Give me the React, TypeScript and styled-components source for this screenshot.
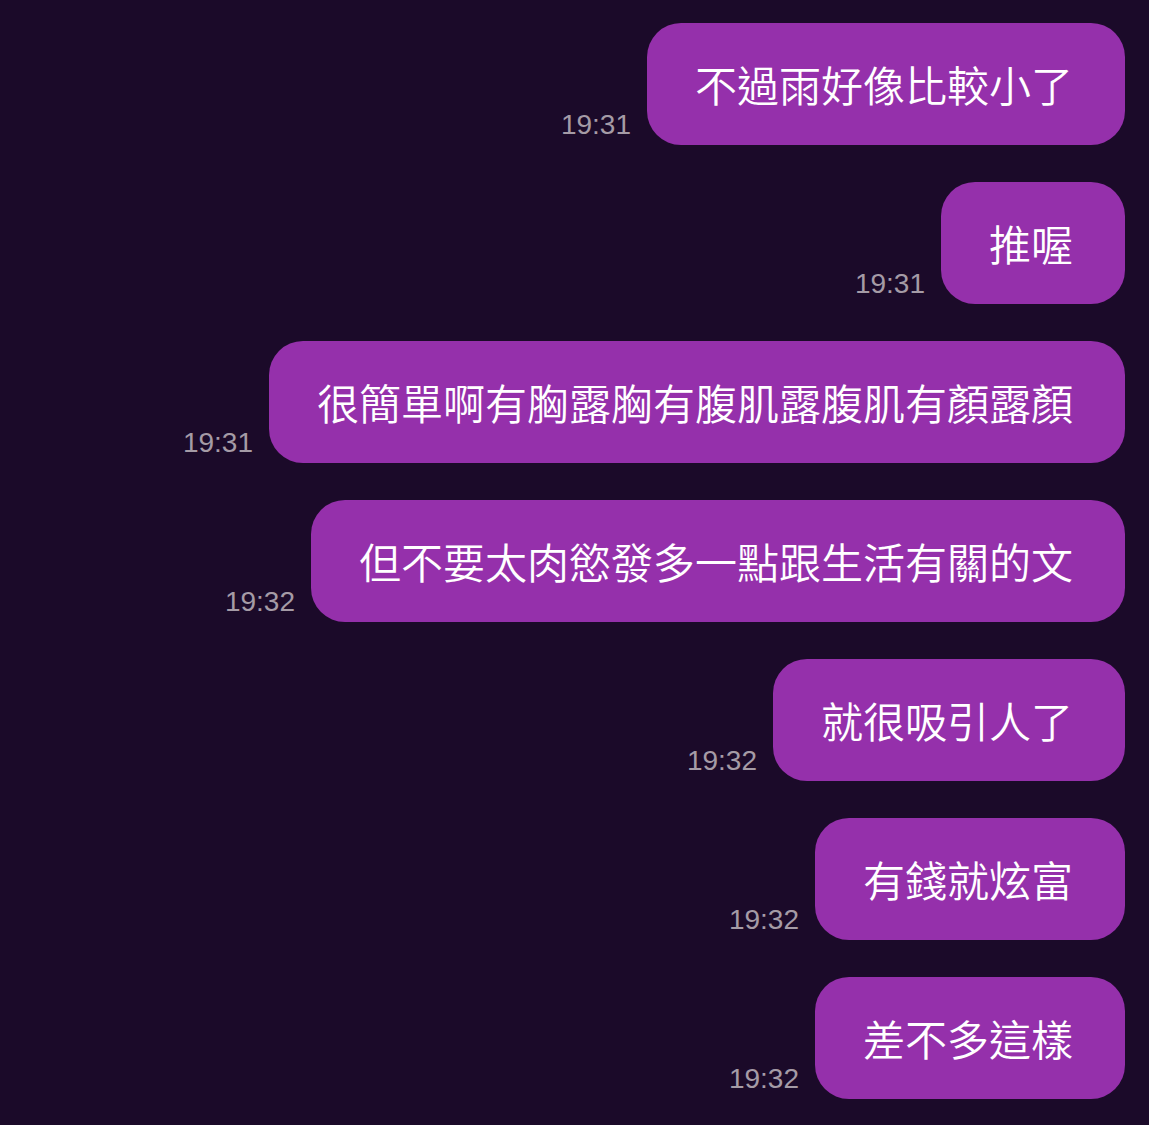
import React from "react";
import styled, { createGlobalStyle } from "styled-components";

interface Message {
  id: number;
  text: string;
  time: string;
}

const messages: Message[] = [
  { id: 1, text: "不過雨好像比較小了", time: "19:31" },
  { id: 2, text: "推喔", time: "19:31" },
  { id: 3, text: "很簡單啊有胸露胸有腹肌露腹肌有顏露顏", time: "19:31" },
  { id: 4, text: "但不要太肉慾發多一點跟生活有關的文", time: "19:32" },
  { id: 5, text: "就很吸引人了", time: "19:32" },
  { id: 6, text: "有錢就炫富", time: "19:32" },
  { id: 7, text: "差不多這樣", time: "19:32" },
];

const GlobalStyle = createGlobalStyle`
  html, body {
    margin: 0;
    padding: 0;
    background: #1b0a29;
  }
`;

export default function App() {
  return (
    <>
      <GlobalStyle />
      <Chat>
        {messages.map((m) => (
          <Row key={m.id}>
            <Time>{m.time}</Time>
            <Bubble>{m.text}</Bubble>
          </Row>
        ))}
      </Chat>
    </>
  );
}

const Chat = styled.div`
  width: 1149px;
  height: 1125px;
  box-sizing: border-box;
  padding: 23px 24px 0 0;
  display: flex;
  flex-direction: column;
  gap: 37px;
  background: #1b0a29;
  overflow: hidden;
`;

const Row = styled.div`
  display: flex;
  justify-content: flex-end;
  align-items: flex-end;
  gap: 16px;
`;

const Time = styled.div`
  font-family: "Liberation Sans", Arial, sans-serif;
  font-size: 28px;
  line-height: 28px;
  color: #a59ba6;
  margin-bottom: 6px;
`;

const Bubble = styled.div`
  height: 122px;
  box-sizing: border-box;
  padding: 0 52px 0 48px;
  display: flex;
  align-items: center;
  background: #9530ab;
  border-radius: 34px;
  color: #ffffff;
  font-family: "Noto Sans CJK TC", "Noto Sans CJK SC", sans-serif;
  font-size: 42px;
  font-weight: 350;
  line-height: 42px;
  white-space: nowrap;
`;
